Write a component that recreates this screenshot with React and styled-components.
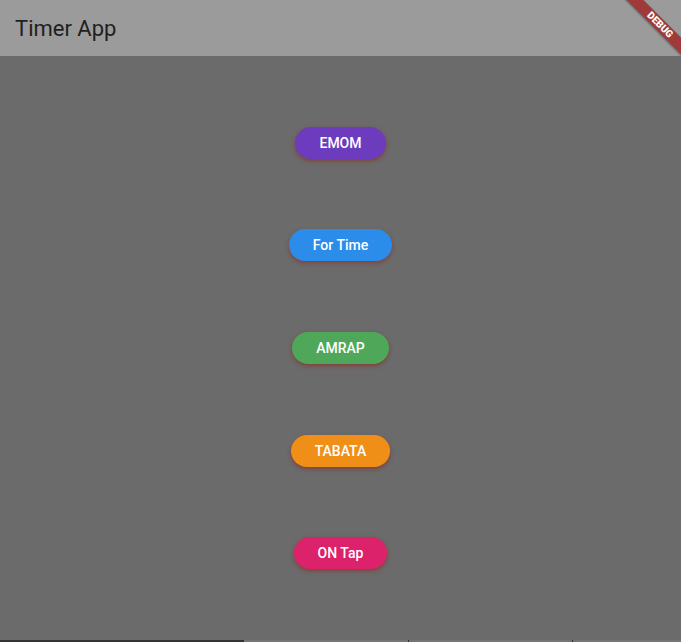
import React from "react";
import styled, { createGlobalStyle } from "styled-components";

const GlobalStyle = createGlobalStyle`
  html, body {
    margin: 0;
    padding: 0;
    background: #6b6b6b;
    font-family: Roboto, "Noto Sans", sans-serif;
  }
`;

const Screen = styled.div`
  position: relative;
  width: 681px;
  height: 642px;
  display: flex;
  flex-direction: column;
  overflow: hidden;
  background: #6b6b6b;
`;

const AppBar = styled.header`
  height: 56px;
  flex: none;
  display: flex;
  align-items: center;
  padding: 0 15px;
  background: #9b9b9b;
  box-sizing: border-box;
`;

const Title = styled.h1`
  margin: 0;
  font-size: 22px;
  font-weight: 400;
  color: #1f1f1f;
`;

const Body = styled.main`
  flex: 1;
  display: flex;
  flex-direction: column;
  align-items: center;
  justify-content: space-evenly;
`;

const PillButton = styled.button`
  height: 32px;
  padding: 0 24px;
  border: none;
  border-radius: 16px;
  background: ${(p) => p.$color};
  color: #fff;
  font-family: Roboto, sans-serif;
  font-size: 14px;
  font-weight: 500;
  box-shadow: 0 2px 4px rgba(150, 30, 20, 0.55);
  cursor: pointer;
`;

const BottomStrip = styled.div`
  height: 2px;
  flex: none;
  display: flex;
`;

const StripPart = styled.div`
  width: ${(p) => p.$w}px;
  flex: ${(p) => (p.$w ? "none" : 1)};
  background: ${(p) => p.$color};
`;

// flutter style debug ribbon over the corner
const Banner = styled.div`
  position: absolute;
  top: 19px;
  right: -39px;
  width: 120px;
  height: 12px;
  transform: rotate(45deg);
  background: #a03a3a;
  color: #fff;
  font-family: Roboto, "DejaVu Sans", sans-serif;
  font-size: 10px;
  font-weight: 900;
  line-height: 12px;
  text-align: center;
  box-shadow: 0 1px 2px rgba(0, 0, 0, 0.3);
`;

const timers = [
  { label: "EMOM", color: "#6d3cbe" },
  { label: "For Time", color: "#2b8ce9" },
  { label: "AMRAP", color: "#4fa75a" },
  { label: "TABATA", color: "#f08f17" },
  { label: "ON Tap", color: "#dc226a" },
];

export default function App() {
  return (
    <>
      <GlobalStyle />
      <Screen>
        <AppBar>
          <Title>Timer App</Title>
        </AppBar>
        <Body>
          {timers.map((t) => (
            <PillButton key={t.label} $color={t.color}>
              {t.label}
            </PillButton>
          ))}
        </Body>
        <BottomStrip>
          <StripPart $w={244} $color="#333" />
          <StripPart $w={164} $color="#757575" />
          <StripPart $w={1} $color="#333" />
          <StripPart $w={163} $color="#757575" />
          <StripPart $w={1} $color="#333" />
          <StripPart $color="#757575" />
        </BottomStrip>
        <Banner>DEBUG</Banner>
      </Screen>
    </>
  );
}
